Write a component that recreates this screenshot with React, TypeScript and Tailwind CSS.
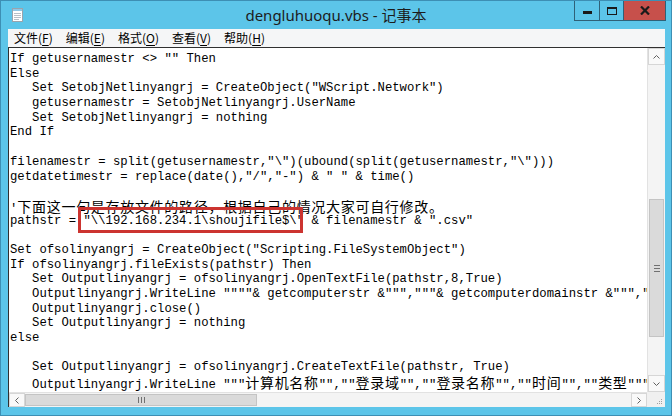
import React from "react";

const lines: string[] = [
  'If getusernamestr <> "" Then',
  "Else",
  '   Set SetobjNetlinyangrj = CreateObject("WScript.Network")',
  "   getusernamestr = SetobjNetlinyangrj.UserName",
  "   Set SetobjNetlinyangrj = nothing",
  "End If",
  "",
  'filenamestr = split(getusernamestr,"\\")(ubound(split(getusernamestr,"\\")))',
  'getdatetimestr = replace(date(),"/","-") & " " & time()',
  "",
  "'下面这一句是存放文件的路径，根据自己的情况大家可自行修改。",
  'pathstr = "\\\\192.168.234.1\\shoujifile$\\" & filenamestr & ".csv"',
  "",
  'Set ofsolinyangrj = CreateObject("Scripting.FileSystemObject")',
  "If ofsolinyangrj.fileExists(pathstr) Then",
  "   Set Outputlinyangrj = ofsolinyangrj.OpenTextFile(pathstr,8,True)",
  '   Outputlinyangrj.WriteLine """"& getcomputerstr &""","""& getcomputerdomainstr &""","""& getusernamestr &""""',
  "   Outputlinyangrj.close()",
  "   Set Outputlinyangrj = nothing",
  "else",
  "",
  "   Set Outputlinyangrj = ofsolinyangrj.CreateTextFile(pathstr, True)",
  '   Outputlinyangrj.WriteLine """计算机名称"",""登录域"",""登录名称"",""时间"",""类型"""',
];

const CJK = /([\u3000-\u303f\u3400-\u9fff\uff00-\uffef]+)/;

function renderLine(s: string) {
  const parts = s.split(CJK);
  return parts.map((p, i) =>
    i % 2 === 1 ? (
      <span
        key={i}
        className="font-['Noto_Sans_CJK_SC',sans-serif] text-[14px] tracking-[0.7px] leading-[14.7px]"
      >
        {p}
      </span>
    ) : (
      <React.Fragment key={i}>{p}</React.Fragment>
    )
  );
}

function NotepadIcon() {
  return (
    <svg width="11" height="14" viewBox="0 0 11 14">
      <rect x="0.5" y="0.5" width="10" height="13" fill="#ffffff" stroke="#9aa4ad" />
      <rect x="1" y="1" width="9" height="2" fill="#8fc7e6" />
      <line x1="2" y1="5.5" x2="9" y2="5.5" stroke="#b8c0c8" />
      <line x1="2" y1="7.5" x2="9" y2="7.5" stroke="#b8c0c8" />
      <line x1="2" y1="9.5" x2="9" y2="9.5" stroke="#b8c0c8" />
      <line x1="2" y1="11.5" x2="7" y2="11.5" stroke="#b8c0c8" />
    </svg>
  );
}

function MenuItem({ label, k }: { label: string; k: string }) {
  return (
    <span className="whitespace-nowrap">
      {label}(<span className="underline underline-offset-2">{k}</span>)
    </span>
  );
}

export default function App() {
  return (
    <div className="w-[672px] h-[416px] bg-[#5cc5e9] border border-[#3d8fb4] flex flex-col overflow-hidden">
      {/* Title bar */}
      <div className="h-[28px] grid grid-cols-[1fr_auto_1fr] items-start shrink-0">
        <div className="pl-[11px] pt-[7px]">
          <NotepadIcon />
        </div>
        <div className="pt-[4px] text-[15px] leading-[20px] text-[#1c1c1c] font-['Noto_Sans','Noto_Sans_CJK_SC',sans-serif]">
          dengluhuoqu.vbs - 记事本
        </div>
        <div className="flex justify-end pr-[5px]">
          <div className="flex h-[20px] border-b border-l border-[#2f6178]">
            <div className="w-[25px] h-full flex items-center justify-center border-r border-[#2f6178]">
              <div className="w-[9px] h-[3px] bg-[#1a1a1a] mt-[3px]" />
            </div>
            <div className="w-[24px] h-full flex items-center justify-center border-r border-[#2f6178]">
              <div className="w-[10px] h-[8px] border border-t-2 border-[#1a1a1a]" />
            </div>
            <div className="w-[42px] h-full flex items-center justify-center bg-[#c7504b] border-r border-[#2f6178]">
              <svg width="10" height="9" viewBox="0 0 10 9">
                <path d="M1 0.5 L9 8.5 M9 0.5 L1 8.5" stroke="#1a1a1a" strokeWidth="2.2" />
              </svg>
            </div>
          </div>
        </div>
      </div>

      {/* Body */}
      <div className="flex-1 flex flex-col pl-[7px] pr-[6px] pb-[8px] min-h-0">
        {/* Menu bar */}
        <div className="h-[18px] shrink-0 bg-[#f5f6f7] flex items-center gap-[13px] pl-[6px] text-[12px] leading-[16px] text-black font-['Noto_Sans_CJK_SC','Noto_Sans',sans-serif]">
          <MenuItem label="文件" k="F" />
          <MenuItem label="编辑" k="E" />
          <MenuItem label="格式" k="O" />
          <MenuItem label="查看" k="V" />
          <MenuItem label="帮助" k="H" />
        </div>

        {/* Edit control */}
        <div className="flex-1 flex flex-col border-t border-l border-[#303030] bg-white min-h-0">
          <div className="flex-1 flex min-h-0">
            <div className="flex-1 relative overflow-hidden bg-white pt-[4px] pl-[1px] font-['Liberation_Mono','Noto_Sans_CJK_SC',monospace] text-[12.25px] leading-[14.7px] text-black">
              {lines.map((l, i) => (
                <div key={i} className="h-[14.7px] whitespace-pre">
                  {renderLine(l)}
                </div>
              ))}
              <div className="absolute left-[69px] top-[159px] w-[225px] h-[26px] border-[3px] border-[#cc3430]" />
            </div>
            {/* Vertical scrollbar */}
            <div className="w-[18px] flex flex-col bg-[#f4f4f4] border-l border-[#e2e2e2]">
              <div className="h-[17px] flex items-center justify-center border border-[#d6d6d6] bg-[#f9f9f9]">
                <svg width="7" height="4" viewBox="0 0 7 4">
                  <path d="M0.5 3.5 L3.5 0.5 L6.5 3.5" stroke="#606060" fill="none" />
                </svg>
              </div>
              <div className="flex-1 flex flex-col">
                <div className="h-[134px]" />
                <div className="h-[138px] mx-[1px] bg-[#dadada] border border-[#c4c4c4] flex items-center justify-center">
                  <div className="flex flex-col gap-[2px]">
                    <div className="w-[6px] h-[1px] bg-[#707070]" />
                    <div className="w-[6px] h-[1px] bg-[#707070]" />
                    <div className="w-[6px] h-[1px] bg-[#707070]" />
                  </div>
                </div>
              </div>
              <div className="h-[17px] flex items-center justify-center border border-[#d6d6d6] bg-[#f9f9f9]">
                <svg width="7" height="4" viewBox="0 0 7 4">
                  <path d="M0.5 0.5 L3.5 3.5 L6.5 0.5" stroke="#606060" fill="none" />
                </svg>
              </div>
            </div>
          </div>
          {/* Horizontal scrollbar row */}
          <div className="h-[15px] shrink-0 flex">
            <div className="flex-1 flex bg-[#f4f4f4] border-t border-[#e2e2e2]">
              <div className="w-[16px] flex items-center justify-center border border-[#d6d6d6] bg-[#f9f9f9]">
                <svg width="4" height="7" viewBox="0 0 4 7">
                  <path d="M3.5 0.5 L0.5 3.5 L3.5 6.5" stroke="#606060" fill="none" />
                </svg>
              </div>
              <div className="w-[232px] my-[1px] bg-[#dadada] border border-[#c4c4c4] flex items-center justify-center">
                <div className="flex gap-[2px]">
                  <div className="w-[1px] h-[6px] bg-[#707070]" />
                  <div className="w-[1px] h-[6px] bg-[#707070]" />
                  <div className="w-[1px] h-[6px] bg-[#707070]" />
                </div>
              </div>
              <div className="flex-1" />
              <div className="w-[16px] flex items-center justify-center border border-[#d6d6d6] bg-[#f9f9f9]">
                <svg width="4" height="7" viewBox="0 0 4 7">
                  <path d="M0.5 0.5 L3.5 3.5 L0.5 6.5" stroke="#606060" fill="none" />
                </svg>
              </div>
            </div>
            <div className="w-[18px] bg-[#f0f0f0] relative">
              <svg className="absolute right-[2px] bottom-[2px]" width="8" height="8" viewBox="0 0 8 8">
                <rect x="6" y="2" width="1" height="1" fill="#a0a0a0" />
                <rect x="6" y="4" width="1" height="1" fill="#a0a0a0" />
                <rect x="4" y="4" width="1" height="1" fill="#a0a0a0" />
                <rect x="6" y="6" width="1" height="1" fill="#a0a0a0" />
                <rect x="4" y="6" width="1" height="1" fill="#a0a0a0" />
                <rect x="2" y="6" width="1" height="1" fill="#a0a0a0" />
              </svg>
            </div>
          </div>
        </div>
      </div>
    </div>
  );
}
